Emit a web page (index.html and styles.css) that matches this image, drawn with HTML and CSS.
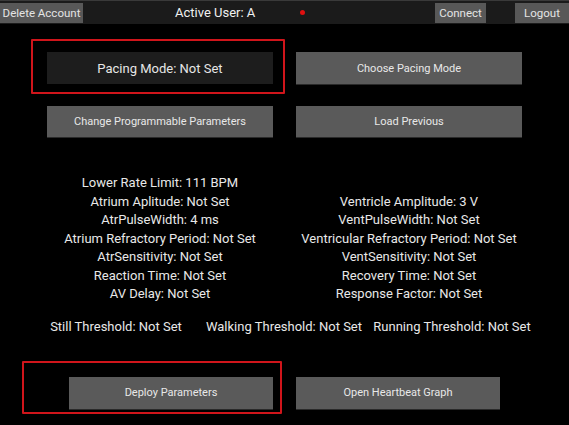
FILE: index.html
```html
<!DOCTYPE html>
<html>
<head>
<meta charset="utf-8">
<link rel="stylesheet" href="styles.css">
</head>
<body>
<div class="topbar">
  <div class="tbtn tbtn-delete">Delete Account</div>
  <div class="user">Active User: A</div>
  <div class="dot"></div>
  <div class="spacer"></div>
  <div class="tbtn tbtn-connect">Connect</div>
  <div class="tbtn tbtn-logout">Logout</div>
</div>

<div class="btngrid top">
  <div class="cell highlight highlight-top"><div class="modebox">Pacing Mode: Not Set</div></div>
  <div class="cell"><div class="btn tall">Choose Pacing Mode</div></div>
  <div class="cell"><div class="btn">Change Programmable Parameters</div></div>
  <div class="cell"><div class="btn">Load Previous</div></div>
</div>

<div class="params">
  <div class="col">
    <div>Lower Rate Limit: 111 BPM</div>
    <div>Atrium Aplitude: Not Set</div>
    <div>AtrPulseWidth: 4 ms</div>
    <div>Atrium Refractory Period: Not Set</div>
    <div>AtrSensitivity: Not Set</div>
    <div>Reaction Time: Not Set</div>
    <div>AV Delay: Not Set</div>
  </div>
  <div class="col">
    <div>Ventricle Amplitude: 3 V</div>
    <div>VentPulseWidth: Not Set</div>
    <div>Ventricular Refractory Period: Not Set</div>
    <div>VentSensitivity: Not Set</div>
    <div>Recovery Time: Not Set</div>
    <div>Response Factor: Not Set</div>
  </div>
</div>

<div class="thresholds">
  <div>Still Threshold: Not Set</div>
  <div>Walking Threshold: Not Set</div>
  <div>Running Threshold: Not Set</div>
</div>

<div class="btngrid bottom">
  <div class="cell highlight highlight-bottom"><div class="btn deploy">Deploy Parameters</div></div>
  <div class="cell"><div class="btn graph">Open Heartbeat Graph</div></div>
</div>
</body>
</html>
```
FILE: styles.css
```css
html, body {
  margin: 0;
  padding: 0;
  background: #000;
}
body {
  width: 569px;
  height: 425px;
  overflow: hidden;
  font-family: Roboto, "Liberation Sans", sans-serif;
  color: #e8e8e8;
}

.topbar {
  height: 24px;
  background: #1b1b1b;
  border-top: 1px solid #3a3a3a;
  box-sizing: border-box;
  display: flex;
  align-items: center;
}
.tbtn {
  height: 20px;
  background: #585858;
  color: #e4e4e4;
  font-size: 11.5px;
  display: flex;
  align-items: center;
  justify-content: center;
  margin-top: 1px;
}
.tbtn-delete { width: 83px; }
.tbtn-connect { width: 51px; }
.tbtn-logout { width: 54px; margin-left: 29px; }
.user {
  margin-left: 92px;
  font-size: 13px;
  color: #f0f0f0;
}
.dot {
  width: 5px;
  height: 5px;
  border-radius: 50%;
  background: #e01010;
  margin-left: 45px;
}
.spacer { flex: 1; }

.btngrid {
  display: grid;
  grid-template-columns: 226px 226px;
  column-gap: 23px;
  margin-left: 47px;
}
.btngrid.top {
  margin-top: 28px;
  row-gap: 22px;
}
.cell { position: relative; }
.highlight::before {
  content: "";
  position: absolute;
  border: 2px solid #d0151b;
  border-radius: 1px;
  box-sizing: border-box;
  pointer-events: none;
}
.highlight-top::before {
  top: -13px;
  left: -16px;
  right: -12px;
  bottom: -10px;
}
.highlight-bottom::before {
  top: -16px;
  left: -25px;
  right: -9px;
  bottom: -5px;
}

.modebox {
  height: 32px;
  background: #1d1d1d;
  color: #e6e6e6;
  font-size: 13px;
  display: flex;
  align-items: center;
  justify-content: center;
}
.btn {
  height: 31px;
  background: #5a5a5a;
  color: #e8e8e8;
  font-size: 11px;
  display: flex;
  align-items: center;
  justify-content: center;
  box-shadow: 0 1px 0 #2a2a2a;
}
.btn.tall { height: 32px; }

.params {
  display: grid;
  grid-template-columns: 226px 226px;
  column-gap: 23px;
  margin-left: 47px;
  margin-top: 37px;
  align-items: end;
  font-size: 13px;
  line-height: 18.5px;
  text-align: center;
  white-space: nowrap;
}

.thresholds {
  display: grid;
  grid-template-columns: repeat(3, 168px);
  margin-left: 32px;
  margin-top: 14px;
  font-size: 13px;
  line-height: 18px;
  text-align: center;
  white-space: nowrap;
}

.btngrid.bottom {
  margin-top: 41px;
}
.btn.deploy {
  height: 32px;
  margin-left: 22px;
}
.btn.graph {
  height: 32px;
  width: 204px;
}
```
